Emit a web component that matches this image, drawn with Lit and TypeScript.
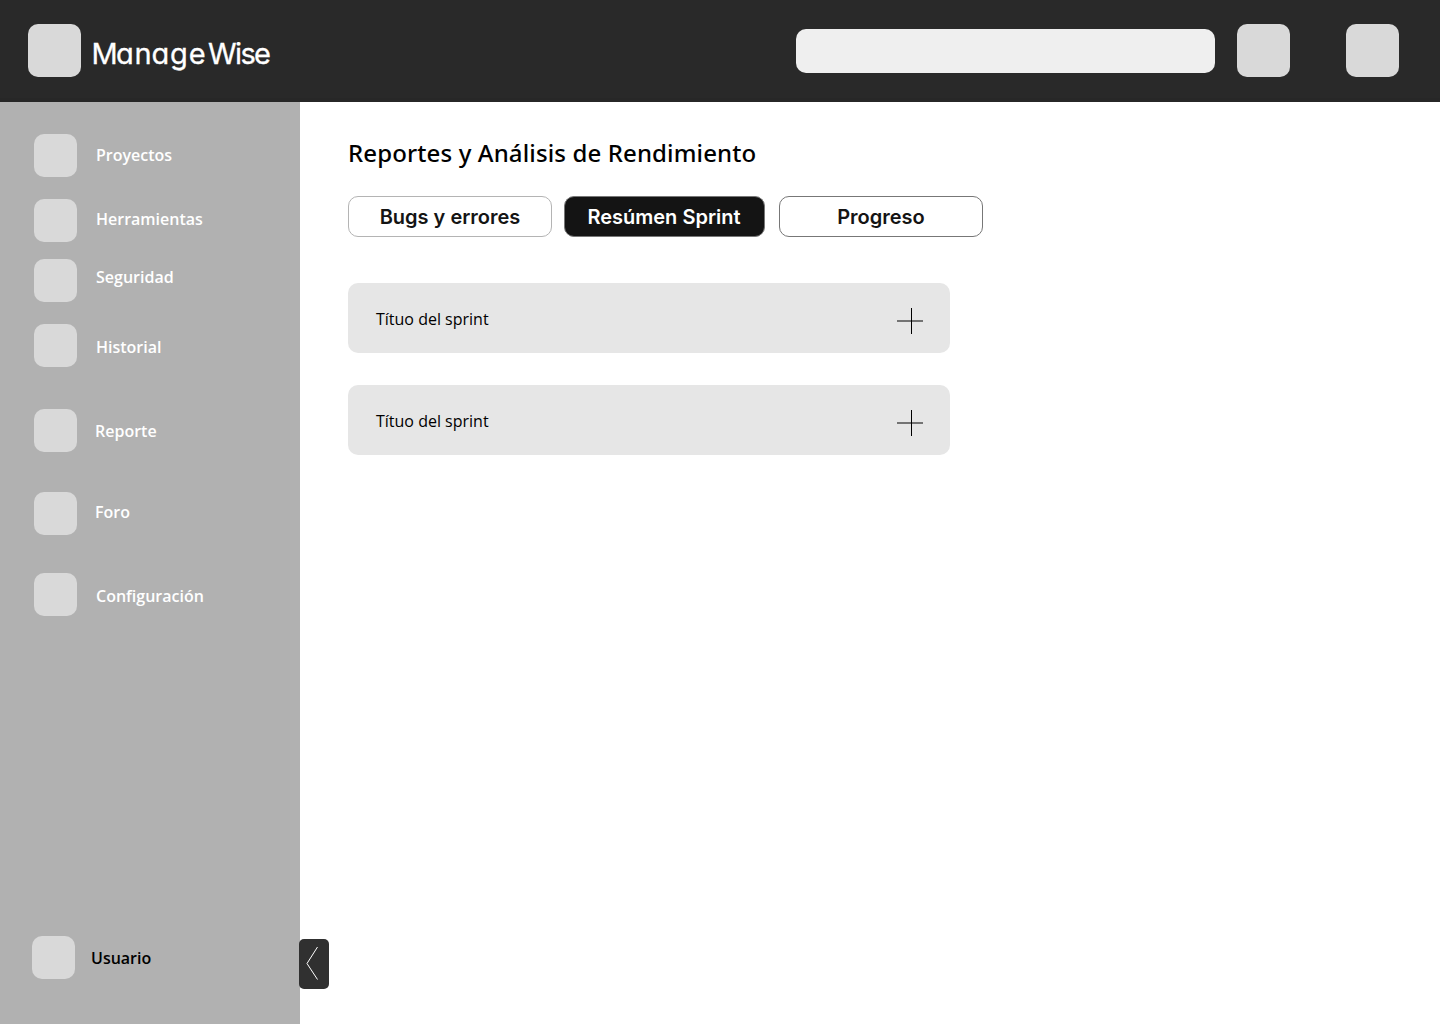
import { LitElement, html, css } from "lit";
import { customElement } from "lit/decorators.js";

const NAV = ["Proyectos", "Herramientas", "Seguridad", "Historial", "Reporte", "Foro", "Configuración"];
const SPRINTS = ["Títuo del sprint", "Títuo del sprint"];

@customElement("app-root")
export class AppRoot extends LitElement {
  static styles = css`
    :host {
      display: flex;
      flex-direction: column;
      height: 1024px;
      background: #fff;
      color: #000;
      font-family: "Open Sans", "Noto Sans", sans-serif;
      font-size: 16px;
      line-height: 22px;
      overflow: hidden;
    }
    * { box-sizing: border-box; }
    .header {
      flex: none;
      height: 102px;
      display: flex;
      align-items: flex-start;
      padding: 24px 41px 0 28px;
      background: #292929;
      border-bottom: 4px solid #272727;
    }
    .tile { flex: none; width: 53px; height: 53px; border-radius: 10px; background: #d9d9d9; }
    .tile.small { width: 43px; height: 43px; }
    .brand { flex: none; width: 190px; height: 53px; margin-left: 8px; }
    .brand text {
      font-family: Inter, sans-serif;
      font-size: 29px;
      font-weight: 400;
      font-feature-settings: "cv11";
      fill: #fff;
      stroke: #fff;
      stroke-width: 0.3px;
    }
    .search { width: 419px; height: 44px; margin: 5px 22px 0 auto; border-radius: 10px; background: #efefef; }
    .avatar { margin-left: 56px; }
    .body { flex: 1; display: flex; min-height: 0; }
    .side {
      position: relative;
      flex: none;
      width: 300px;
      display: flex;
      flex-direction: column;
      justify-content: space-between;
      padding: 32px 0 45px 34px;
      background: #b1b1b1;
      font-weight: 600;
    }
    .nav { display: flex; flex-direction: column; color: #fff; }
    .item { display: flex; height: 43px; margin-bottom: 22px; }
    .label { padding: 10px 0 0 19px; }
    .item:nth-child(2) { margin-bottom: 17px; }
    .item:nth-child(4) { margin-bottom: 42px; }
    .item:nth-child(5) { margin-bottom: 40px; }
    .item:nth-child(6) { margin-bottom: 38px; }
    .item:nth-child(2) .label { padding-top: 9px; }
    .item:nth-child(3) .label { padding-top: 7px; }
    .item:nth-child(4) .label { padding-top: 12px; }
    .item:nth-child(5) .label { padding: 11px 0 0 18px; }
    .item:nth-child(6) .label { padding: 9px 0 0 18px; }
    .item:nth-child(7) .label { padding-top: 12px; }
    .user { display: flex; margin-left: -2px; }
    .user .label { padding: 11px 0 0 16px; }
    .collapse {
      position: absolute;
      left: 299px;
      bottom: 35px;
      width: 30px;
      height: 50px;
      padding: 0;
      border: 0;
      border-radius: 5px;
      background: #303030;
    }
    .collapse svg { display: block; }
    .main { flex: 1; padding: 36px 0 0 48px; }
    .title {
      margin: 0;
      font-family: "Noto Sans", sans-serif;
      font-size: 24px;
      line-height: 30px;
      font-weight: 500;
      letter-spacing: 0.125px;
    }
    .tabs { display: flex; margin-top: 28px; }
    .tab {
      width: 204px;
      height: 41px;
      padding: 1px 0 0;
      border: 1px solid #b4b4b4;
      border-radius: 10px;
      background: #fff;
      color: #141414;
      font: 600 20px/38px Inter, sans-serif;
      text-align: center;
    }
    .tab.active { width: 201px; margin: 0 14px 0 12px; padding-right: 1px; background: #141414; border-color: #777; color: #fff; }
    .tab.progress { border-color: #777; }
    .list { display: flex; flex-direction: column; gap: 32px; margin-top: 46px; }
    .card {
      display: flex;
      justify-content: space-between;
      width: 602px;
      height: 70px;
      padding: 25px 27px 0 28px;
      border-radius: 10px;
      background: #e6e6e6;
    }
    .plus { display: block; width: 26px; height: 26px; }
  `;

  render() {
    return html`
      <header class="header">
        <div class="tile"></div>
        <svg class="brand" viewBox="0 0 190 53">
          <text x="2.5 27 45.5 62.5 81 99.7 119 146 151.5 165" y="40">ManageWise</text>
        </svg>
        <div class="search"></div>
        <div class="tile"></div>
        <div class="tile avatar"></div>
      </header>
      <div class="body">
        <aside class="side">
          <nav class="nav">
            ${NAV.map((n) => html`<div class="item"><div class="tile small"></div><span class="label">${n}</span></div>`)}
          </nav>
          <div class="user"><div class="tile small"></div><span class="label">Usuario</span></div>
          <button class="collapse" aria-label="Contraer">
            <svg width="30" height="50" viewBox="0 0 30 50" fill="none" stroke="#fff">
              <path d="M18.5 8 L8 24.5 L18.5 40.5" />
            </svg>
          </button>
        </aside>
        <main class="main">
          <h1 class="title">Reportes y Análisis de Rendimiento</h1>
          <div class="tabs">
            <button class="tab">Bugs y errores</button>
            <button class="tab active">Resúmen Sprint</button>
            <button class="tab progress">Progreso</button>
          </div>
          <div class="list">
            ${SPRINTS.map(
              (s) => html`<div class="card">
                <span>${s}</span>
                <svg class="plus" viewBox="0 0 26 26">
                  <path d="M0 13H26" stroke="#000" />
                  <path d="M14.5 0V26" stroke="#000" />
                </svg>
              </div>`
            )}
          </div>
        </main>
      </div>
    `;
  }
}
